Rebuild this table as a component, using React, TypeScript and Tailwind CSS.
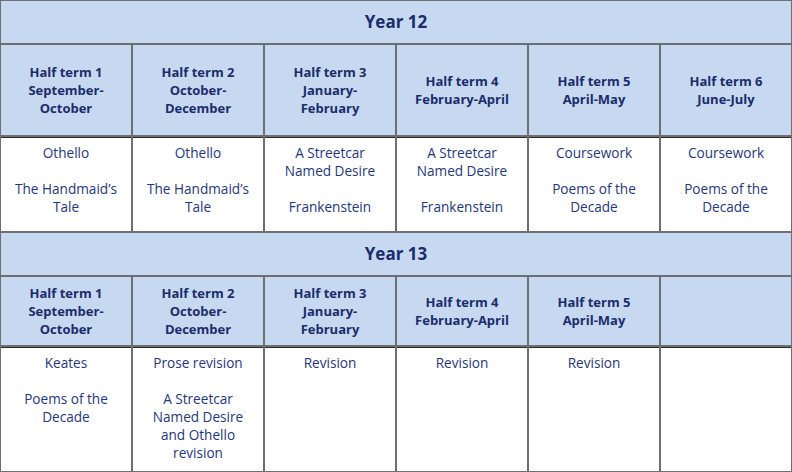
import React from "react";

const y12Heads = [
  ["Half term 1", "September-", "October"],
  ["Half term 2", "October-", "December"],
  ["Half term 3", "January-", "February"],
  ["Half term 4", "February-April"],
  ["Half term 5", "April-May"],
  ["Half term 6", "June-July"],
];

const y12Body: string[][] = [
  ["Othello", "", "The Handmaid’s", "Tale"],
  ["Othello", "", "The Handmaid’s", "Tale"],
  ["A Streetcar", "Named Desire", "", "Frankenstein"],
  ["A Streetcar", "Named Desire", "", "Frankenstein"],
  ["Coursework", "", "Poems of the", "Decade"],
  ["Coursework", "", "Poems of the", "Decade"],
];

const y13Heads = [
  ["Half term 1", "September-", "October"],
  ["Half term 2", "October-", "December"],
  ["Half term 3", "January-", "February"],
  ["Half term 4", "February-April"],
  ["Half term 5", "April-May"],
  [],
];

const y13Body: string[][] = [
  ["Keates", "", "Poems of the", "Decade"],
  ["Prose revision", "", "A Streetcar", "Named Desire", "and Othello", "revision"],
  ["Revision"],
  ["Revision"],
  ["Revision"],
  [],
];

function Head({ lines }: { lines: string[] }) {
  return (
    <div className="bg-[#c6d9f0] flex flex-col items-center justify-center text-center text-[13px] leading-[18px] font-bold text-[#1b2c6b]">
      {lines.map((l, i) => (
        <div key={i}>{l}</div>
      ))}
    </div>
  );
}

function Body({ lines }: { lines: string[] }) {
  return (
    <div className="bg-white border-t border-[#2a2a2a] pt-[6px] flex flex-col items-center text-center text-[13.6px] leading-[18px] text-[#263778]">
      {lines.map((l, i) => (
        <div key={i} className="h-[18px] whitespace-nowrap">{l}</div>
      ))}
    </div>
  );
}

export default function App() {
  return (
    <div
      className="w-[792px] h-[472px] bg-[#6d6f73] p-[1px] grid grid-cols-6 gap-[2px] grid-rows-[42px_90px_94px_42px_68px_124px]"
      style={{ fontFamily: '"Open Sans", "Noto Sans", sans-serif' }}
    >
      <div className="col-span-6 bg-[#c6d9f0] flex items-center justify-center text-[17px] font-bold text-[#1b2c6b]">
        Year 12
      </div>
      {y12Heads.map((h, i) => (
        <Head key={"h12" + i} lines={h} />
      ))}
      {y12Body.map((b, i) => (
        <Body key={"b12" + i} lines={b} />
      ))}
      <div className="col-span-6 bg-[#c6d9f0] flex items-center justify-center text-[17px] font-bold text-[#1b2c6b]">
        Year 13
      </div>
      {y13Heads.map((h, i) => (
        <Head key={"h13" + i} lines={h} />
      ))}
      {y13Body.map((b, i) => (
        <Body key={"b13" + i} lines={b} />
      ))}
    </div>
  );
}
